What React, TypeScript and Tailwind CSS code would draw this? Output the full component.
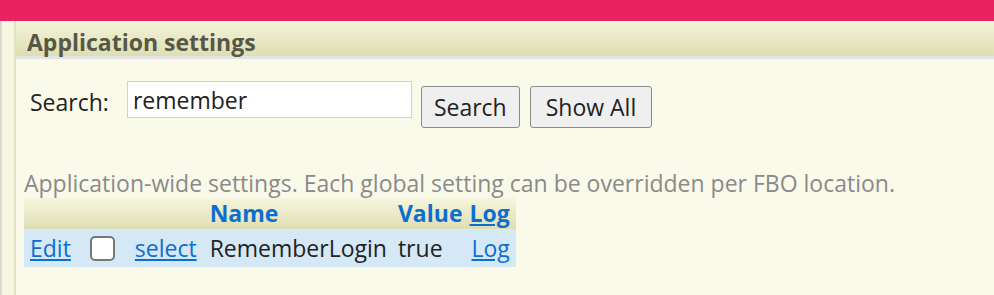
export default function App() {
  return (
    <div className="w-[994px] h-[295px] overflow-hidden bg-[#fafaeb] font-['Open_Sans',sans-serif]">
      <div className="h-[21px] bg-[#e8235f]" />
      <div className="flex h-[274px]">
        <div className="w-[2px] bg-[#d8d8d8]" />
        <div className="w-[12px] bg-[#f5f5e0]" />
        <div className="w-[2px] bg-[#e2e2c4]" />
        <div className="flex-1 flex flex-col">
          <div className="h-[37px] mt-[1px] bg-gradient-to-b from-[#f4f4da] to-[#dedeb3] border-b-[3px] border-[#e4e4e4] flex items-center pl-[11px] pt-[7px]">
            <span className="text-[23px] font-bold text-[#575745] leading-none">Application settings</span>
          </div>
          <div className="flex items-start pl-[14px] pt-[22px]">
            <span className="text-[23px] text-[#222] mt-[4px]">Search:</span>
            <input
              className="ml-[18px] w-[285px] h-[37px] bg-white border border-[#bcd5f2] px-[5px] text-[23px] text-[#222] outline-none"
              defaultValue="remember"
            />
            <button className="ml-[9px] mt-[5px] h-[42px] px-[12px] border border-[#8a8a8a] rounded-[3px] bg-[#efefef] text-[23px] text-[#222] leading-none">
              Search
            </button>
            <button className="ml-[10px] mt-[5px] h-[42px] px-[15px] border border-[#8a8a8a] rounded-[3px] bg-[#efefef] text-[23px] text-[#222] leading-none">
              Show All
            </button>
          </div>
          <div className="pl-[8px] mt-[42px] text-[23px] text-[#8a8a8a] leading-[26px]">
            Application-wide settings. Each global setting can be overridden per FBO location.
          </div>
          <table className="self-start ml-[8px] mt-[2px] text-[23px] border-collapse leading-none">
            <thead>
              <tr className="bg-gradient-to-b from-[#f6f6de] to-[#dedeb4] h-[31px]">
                <th colSpan={3}></th>
                <th className="text-[#0d6ecf] font-bold text-left pl-[3px]">Name</th>
                <th className="text-[#0d6ecf] font-bold text-left pl-[11px] pr-[7px]">Value</th>
                <th className="text-[#0d6ecf] font-bold text-left pr-[6px] underline">Log</th>
              </tr>
            </thead>
            <tbody>
              <tr className="bg-[#d4e8f6] h-[38px]">
                <td className="pl-[6px] pr-[19px]">
                  <a className="text-[#0d6ecf] underline">Edit</a>
                </td>
                <td className="pr-[20px]">
                  <span className="block w-[25px] h-[25px] border-2 border-[#777] rounded-[5px] bg-white" />
                </td>
                <td className="pr-[10px]">
                  <a className="text-[#0d6ecf] underline">select</a>
                </td>
                <td className="pl-[3px] text-[#222]">RememberLogin</td>
                <td className="pl-[11px] pr-[7px] text-[#222]">true</td>
                <td className="pl-[2px] pr-[6px]">
                  <a className="text-[#0d6ecf] underline">Log</a>
                </td>
              </tr>
            </tbody>
          </table>
        </div>
      </div>
    </div>
  );
}
